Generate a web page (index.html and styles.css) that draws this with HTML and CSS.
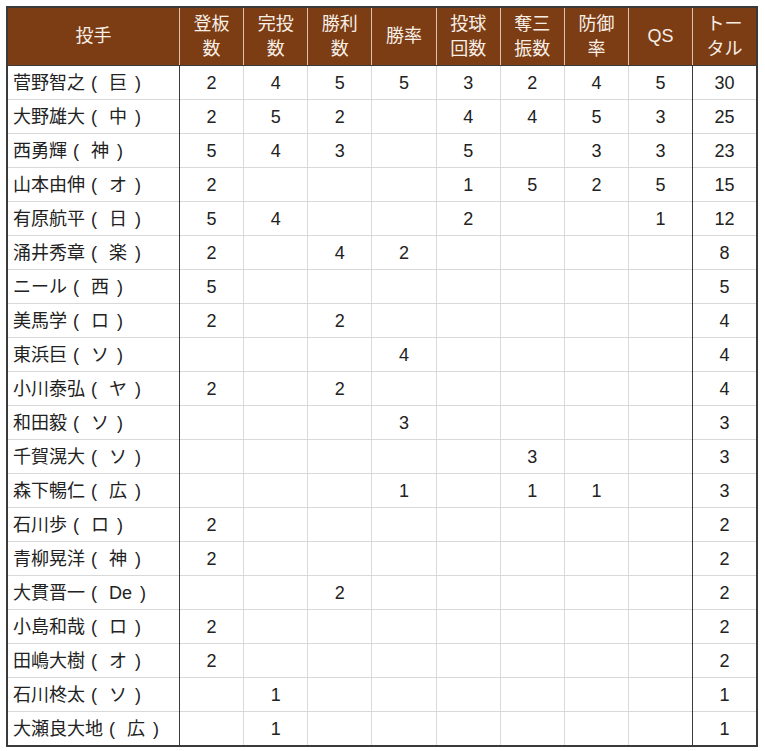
FILE: index.html
```html
<!DOCTYPE html>
<html lang="ja">
<head>
<meta charset="utf-8">
<link rel="stylesheet" href="styles.css">
</head>
<body>
<table class="tbl">
<colgroup>
<col class="c-name"><col class="c-n"><col class="c-n"><col class="c-n"><col class="c-n"><col class="c-n"><col class="c-n"><col class="c-n"><col class="c-n"><col class="c-n">
</colgroup>
<thead>
<tr>
<th class="h-name">投手</th><th>登板<br>数</th><th>完投<br>数</th><th>勝利<br>数</th><th>勝率</th><th>投球<br>回数</th><th>奪三<br>振数</th><th>防御<br>率</th><th>QS</th><th class="h-tot">トー<br>タル</th>
</tr>
</thead>
<tbody>
<tr><td class="nm">菅野智之<span class="pl">(</span>巨<span class="pr">)</span></td><td>2</td><td>4</td><td>5</td><td>5</td><td>3</td><td>2</td><td>4</td><td>5</td><td class="tot">30</td></tr>
<tr><td class="nm">大野雄大<span class="pl">(</span>中<span class="pr">)</span></td><td>2</td><td>5</td><td>2</td><td></td><td>4</td><td>4</td><td>5</td><td>3</td><td class="tot">25</td></tr>
<tr><td class="nm">西勇輝<span class="pl">(</span>神<span class="pr">)</span></td><td>5</td><td>4</td><td>3</td><td></td><td>5</td><td></td><td>3</td><td>3</td><td class="tot">23</td></tr>
<tr><td class="nm">山本由伸<span class="pl">(</span>オ<span class="pr">)</span></td><td>2</td><td></td><td></td><td></td><td>1</td><td>5</td><td>2</td><td>5</td><td class="tot">15</td></tr>
<tr><td class="nm">有原航平<span class="pl">(</span>日<span class="pr">)</span></td><td>5</td><td>4</td><td></td><td></td><td>2</td><td></td><td></td><td>1</td><td class="tot">12</td></tr>
<tr><td class="nm">涌井秀章<span class="pl">(</span>楽<span class="pr">)</span></td><td>2</td><td></td><td>4</td><td>2</td><td></td><td></td><td></td><td></td><td class="tot">8</td></tr>
<tr><td class="nm">ニール<span class="pl">(</span>西<span class="pr">)</span></td><td>5</td><td></td><td></td><td></td><td></td><td></td><td></td><td></td><td class="tot">5</td></tr>
<tr><td class="nm">美馬学<span class="pl">(</span>ロ<span class="pr">)</span></td><td>2</td><td></td><td>2</td><td></td><td></td><td></td><td></td><td></td><td class="tot">4</td></tr>
<tr><td class="nm">東浜巨<span class="pl">(</span>ソ<span class="pr">)</span></td><td></td><td></td><td></td><td>4</td><td></td><td></td><td></td><td></td><td class="tot">4</td></tr>
<tr><td class="nm">小川泰弘<span class="pl">(</span>ヤ<span class="pr">)</span></td><td>2</td><td></td><td>2</td><td></td><td></td><td></td><td></td><td></td><td class="tot">4</td></tr>
<tr><td class="nm">和田毅<span class="pl">(</span>ソ<span class="pr">)</span></td><td></td><td></td><td></td><td>3</td><td></td><td></td><td></td><td></td><td class="tot">3</td></tr>
<tr><td class="nm">千賀滉大<span class="pl">(</span>ソ<span class="pr">)</span></td><td></td><td></td><td></td><td></td><td></td><td>3</td><td></td><td></td><td class="tot">3</td></tr>
<tr><td class="nm">森下暢仁<span class="pl">(</span>広<span class="pr">)</span></td><td></td><td></td><td></td><td>1</td><td></td><td>1</td><td>1</td><td></td><td class="tot">3</td></tr>
<tr><td class="nm">石川歩<span class="pl">(</span>ロ<span class="pr">)</span></td><td>2</td><td></td><td></td><td></td><td></td><td></td><td></td><td></td><td class="tot">2</td></tr>
<tr><td class="nm">青柳晃洋<span class="pl">(</span>神<span class="pr">)</span></td><td>2</td><td></td><td></td><td></td><td></td><td></td><td></td><td></td><td class="tot">2</td></tr>
<tr><td class="nm">大貫晋一<span class="pl">(</span>De<span class="pr">)</span></td><td></td><td></td><td>2</td><td></td><td></td><td></td><td></td><td></td><td class="tot">2</td></tr>
<tr><td class="nm">小島和哉<span class="pl">(</span>ロ<span class="pr">)</span></td><td>2</td><td></td><td></td><td></td><td></td><td></td><td></td><td></td><td class="tot">2</td></tr>
<tr><td class="nm">田嶋大樹<span class="pl">(</span>オ<span class="pr">)</span></td><td>2</td><td></td><td></td><td></td><td></td><td></td><td></td><td></td><td class="tot">2</td></tr>
<tr><td class="nm">石川柊太<span class="pl">(</span>ソ<span class="pr">)</span></td><td></td><td>1</td><td></td><td></td><td></td><td></td><td></td><td></td><td class="tot">1</td></tr>
<tr><td class="nm">大瀬良大地<span class="pl">(</span>広<span class="pr">)</span></td><td></td><td>1</td><td></td><td></td><td></td><td></td><td></td><td></td><td class="tot">1</td></tr>
</tbody>
</table>
</body>
</html>
```
FILE: styles.css
```css
html, body {
  margin: 0;
  padding: 0;
  background: #ffffff;
}
body {
  padding: 6px 0 0 6px;
}
.tbl {
  border-collapse: collapse;
  table-layout: fixed;
  width: 752px;
  border: 2px solid #3a3a3a;
  font-family: "Liberation Sans", "Noto Sans CJK JP", sans-serif;
  font-size: 18px;
  color: #222222;
}
.c-name { width: 172px; }
.c-n { width: 64px; }
.tbl th {
  background: #7c3c14;
  color: #f7efe6;
  font-weight: normal;
  height: 57px;
  padding: 0;
  line-height: 25px;
  text-align: center;
  vertical-align: middle;
  border-left: 1px solid #d9c3ad;
  border-bottom: 1px solid #3a3a3a;
}
.tbl th.h-name { border-left: none; }
.tbl td {
  height: 33px;
  padding: 0;
  line-height: 20px;
  text-align: center;
  vertical-align: middle;
  border-left: 1px solid #d9d9d9;
  border-top: 1px solid #d9d9d9;
}
.tbl td.nm {
  text-align: left;
  padding-left: 5px;
  border-left: none;
  border-right: 1px solid #3a3a3a;
  white-space: nowrap;
}
.tbl td.tot {
  border-left: 1px solid #3a3a3a;
}
.pl {
  display: inline-block;
  width: 24px;
  padding-left: 6px;
  box-sizing: border-box;
  text-align: left;
}
.pr {
  display: inline-block;
  padding-left: 8px;
}
```
